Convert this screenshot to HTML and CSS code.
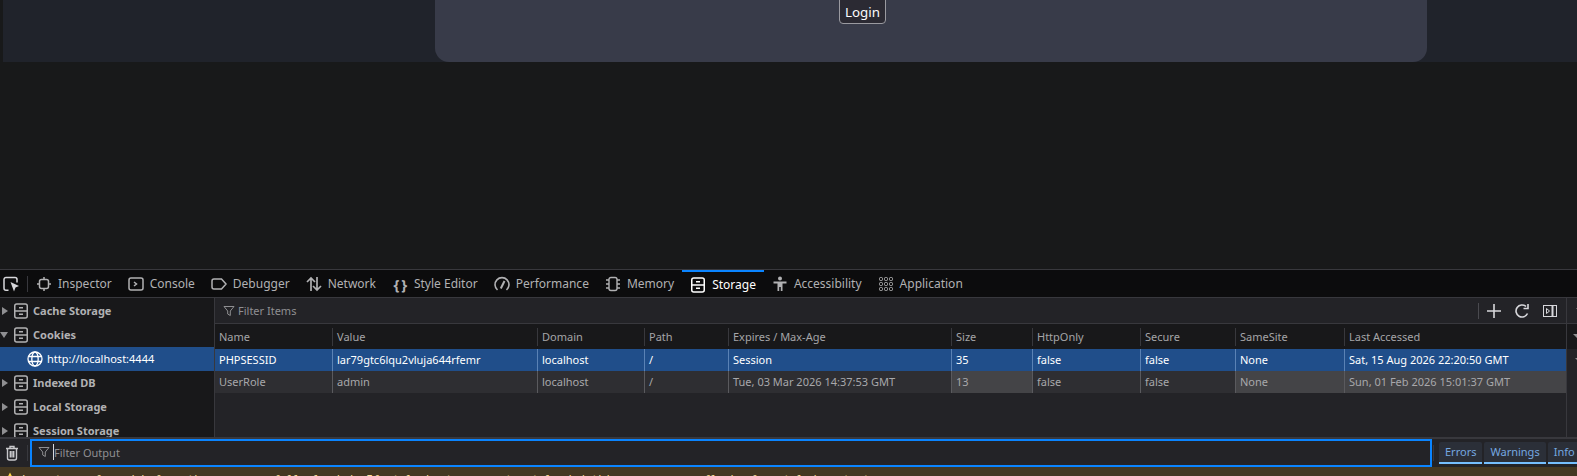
FILE: index.html
```html
<!DOCTYPE html>
<html lang="en">
<head>
  <meta charset="UTF-8">
  <meta name="viewport" content="width=device-width, initial-scale=1.0">
  <title>Storage Inspector</title>
  <link rel="stylesheet" href="styles.css">
</head>
<body>

  <svg class="sprite" width="0" height="0">
    <symbol id="i-storage" viewBox="0 0 16 16">
      <rect x="1.75" y="1" width="12.5" height="14" rx="2" fill="none" stroke="currentColor" stroke-width="1.5"/>
      <path d="M2 8h12M6 4.800h4M6 11.200h4" fill="none" stroke="currentColor" stroke-width="1.400"/>
    </symbol>
    <symbol id="i-filter" viewBox="0 0 12 12">
      <path d="M1 1.500h10L7.300 6v4.500L4.700 9V6z" fill="none" stroke="currentColor" stroke-width="1"/>
    </symbol>
  </svg>

  <!-- the page that is being inspected -->
  <div class="page-frame">
    <div class="page-card">
      <button class="login-btn">Login</button>
    </div>
  </div>
  <div class="page-empty"></div>

  <!-- devtools tabs -->
  <div class="tabs">
    <span class="picker">
      <svg width="16" height="16" viewBox="0 0 16 16" fill="none" stroke="currentColor" stroke-width="1.500">
        <path d="M5.500 14.200H3a2 2 0 0 1-2-2V3.500a2 2 0 0 1 2-2h9a2 2 0 0 1 2 2v3"/>
        <path d="M7.500 6l8.500 4-3.500 1.500-1.500 4z" fill="currentColor" stroke="none"/>
      </svg>
    </span>
    <span class="tab-sep"></span>
    <div class="tab">
      <svg width="16" height="16" viewBox="0 0 16 16" fill="none" stroke="currentColor" stroke-width="1.500">
        <rect x="3.500" y="3.500" width="9" height="9" rx="2"/>
        <path d="M8 1v2.500M8 12.500V15M1 8h2.500M12.500 8H15"/>
      </svg>
      Inspector
    </div>
    <div class="tab">
      <svg width="16" height="16" viewBox="0 0 16 16" fill="none" stroke="currentColor" stroke-width="1.500">
        <rect x="1" y="2" width="14" height="12" rx="2"/>
        <path d="M6 6l2.500 2L6 10"/>
      </svg>
      Console
    </div>
    <div class="tab">
      <svg width="16" height="16" viewBox="0 0 16 16" fill="none" stroke="currentColor" stroke-width="1.500">
        <path d="M3 3h7.500L15 8l-4.500 5H3a2 2 0 0 1-2-2V5a2 2 0 0 1 2-2z"/>
      </svg>
      Debugger
    </div>
    <div class="tab">
      <svg width="16" height="16" viewBox="0 0 16 16" fill="none" stroke="currentColor" stroke-width="1.700">
        <path d="M5 15V2M1 6l4-4 4 4M11 1v13M7 10l4 4 4-4"/>
      </svg>
      Network
    </div>
    <div class="tab">
      <span class="braces">{ }</span>
      Style Editor
    </div>
    <div class="tab">
      <svg width="16" height="16" viewBox="0 0 16 16" fill="none" stroke="currentColor" stroke-width="1.600">
        <path d="M3.500 14A7 7 0 1 1 12.500 14"/>
        <path d="M6.800 12.500L10.500 5" stroke-width="2"/>
      </svg>
      Performance
    </div>
    <div class="tab">
      <svg width="16" height="16" viewBox="0 0 16 16" fill="none" stroke="currentColor" stroke-width="1.400">
        <rect x="4" y="1.500" width="8" height="13" rx="2"/>
        <path d="M1 4h3M1 8h3M1 12h3M12 4h3M12 8h3M12 12h3"/>
      </svg>
      Memory
    </div>
    <div class="tab tab-active">
      <svg width="16" height="16"><use href="#i-storage"/></svg>
      Storage
    </div>
    <div class="tab">
      <svg width="16" height="16" viewBox="0 0 16 16" fill="currentColor">
        <circle cx="8" cy="2.500" r="2"/>
        <path d="M1.500 5.500h13v2H10.500V15H8.800v-4H7.200v4H5.500V7.500H1.500z"/>
      </svg>
      Accessibility
    </div>
    <div class="tab">
      <svg width="16" height="16" viewBox="0 0 16 16" fill="none" stroke="currentColor" stroke-width="1">
        <rect x="1.500" y="1.500" width="3" height="3" rx="1"/><rect x="6.500" y="1.500" width="3" height="3" rx="1"/><rect x="11.500" y="1.500" width="3" height="3" rx="1"/>
        <rect x="1.500" y="6.500" width="3" height="3" rx="1"/><rect x="6.500" y="6.500" width="3" height="3" rx="1"/><rect x="11.500" y="6.500" width="3" height="3" rx="1"/>
        <rect x="1.500" y="11.500" width="3" height="3" rx="1"/><rect x="6.500" y="11.500" width="3" height="3" rx="1"/><rect x="11.500" y="11.500" width="3" height="3" rx="1"/>
      </svg>
      Application
    </div>
  </div>

  <!-- storage panel -->
  <div class="panel">
    <div class="tree">
      <div class="tree-row"><span class="arrow"></span><svg width="16" height="16"><use href="#i-storage"/></svg>Cache Storage</div>
      <div class="tree-row"><span class="arrow arrow-open"></span><svg width="16" height="16"><use href="#i-storage"/></svg>Cookies</div>
      <div class="tree-row tree-selected">
        <svg width="16" height="16" viewBox="0 0 16 16" fill="none" stroke="currentColor" stroke-width="1.300">
          <circle cx="8" cy="8" r="7"/>
          <ellipse cx="8" cy="8" rx="3.200" ry="7"/>
          <path d="M1.500 5.500h13M1.500 10.500h13"/>
        </svg>
        http://localhost:4444
      </div>
      <div class="tree-row"><span class="arrow"></span><svg width="16" height="16"><use href="#i-storage"/></svg>Indexed DB</div>
      <div class="tree-row"><span class="arrow"></span><svg width="16" height="16"><use href="#i-storage"/></svg>Local Storage</div>
      <div class="tree-row"><span class="arrow"></span><svg width="16" height="16"><use href="#i-storage"/></svg>Session Storage</div>
    </div>

    <div class="main">
      <div class="filter-bar">
        <svg class="filter-icon" width="12" height="12"><use href="#i-filter"/></svg>
        <span class="filter-text">Filter Items</span>
        <span class="bar-sep"></span>
        <svg class="bar-icon" width="16" height="16" viewBox="0 0 16 16" fill="none" stroke="currentColor" stroke-width="1.600">
          <path d="M8 1v14M1 8h14"/>
        </svg>
        <svg class="bar-icon" width="16" height="16" viewBox="0 0 16 16" fill="none" stroke="currentColor" stroke-width="1.600">
          <path d="M13.500 10.500A6 6 0 1 1 12 3.500"/>
          <path d="M14 1v4.500H9.500"/>
        </svg>
        <svg class="bar-icon" width="16" height="16" viewBox="0 0 16 16" fill="none" stroke="currentColor" stroke-width="1">
          <rect x="1.500" y="2.500" width="13" height="11"/>
          <path d="M10.500 2.500v11" stroke-width="2"/>
          <path d="M4.500 5.500l3 2.500-3 2.500z"/>
        </svg>
      </div>

      <div class="grid grid-head">
        <div class="th">Name</div>
        <div class="th">Value</div>
        <div class="th">Domain</div>
        <div class="th">Path</div>
        <div class="th">Expires / Max-Age</div>
        <div class="th">Size</div>
        <div class="th">HttpOnly</div>
        <div class="th">Secure</div>
        <div class="th">SameSite</div>
        <div class="th">Last Accessed</div>
      </div>
      <div class="grid row row-selected">
        <div class="td">PHPSESSID</div>
        <div class="td">lar79gtc6lqu2vluja644rfemr</div>
        <div class="td">localhost</div>
        <div class="td">/</div>
        <div class="td">Session</div>
        <div class="td">35</div>
        <div class="td">false</div>
        <div class="td">false</div>
        <div class="td">None</div>
        <div class="td">Sat, 15 Aug 2026 22:20:50 GMT</div>
      </div>
      <div class="grid row">
        <div class="td">UserRole</div>
        <div class="td">admin</div>
        <div class="td">localhost</div>
        <div class="td">/</div>
        <div class="td">Tue, 03 Mar 2026 14:37:53 GMT</div>
        <div class="td td-light">13</div>
        <div class="td">false</div>
        <div class="td">false</div>
        <div class="td td-light">None</div>
        <div class="td td-light">Sun, 01 Feb 2026 15:01:37 GMT</div>
      </div>
    </div>

    <div class="side-strip">
      <div class="strip-top"><span class="strip-arrow"></span></div>
      <div class="strip-head"><span class="strip-arrow"></span></div>
      <div class="strip-row"><span class="strip-arrow"></span></div>
    </div>
  </div>

  <!-- split console -->
  <div class="console-bar">
    <span class="trash">
      <svg width="14" height="16" viewBox="0 0 14 16" fill="none" stroke="currentColor" stroke-width="1.400">
        <path d="M1 3.500h12M5 3.500V1.500h4v2M2.500 3.500V13a2 2 0 0 0 2 2h5a2 2 0 0 0 2-2V3.500M5.300 6v6.500M7 6v6.500M8.700 6v6.500"/>
      </svg>
    </span>
    <span class="tab-sep console-sep"></span>
    <div class="console-input">
      <svg class="filter-icon" width="12" height="12"><use href="#i-filter"/></svg>
      <span class="caret"></span>
      <span class="filter-text">Filter Output</span>
    </div>
    <span class="tab-sep level-sep"></span>
    <button class="level">Errors</button>
    <button class="level">Warnings</button>
    <button class="level">Info</button>
  </div>

  <div class="warn-row">
    <svg class="warn-icon" width="12" height="12" viewBox="0 0 12 12"><path d="M6 0.500L11.500 11H0.500z" fill="#ffd54a"/></svg>
    <span class="warn-text">Layout was forced before the page was fully loaded. If stylesheets are not yet loaded this may cause a flash of unstyled content.</span>
  </div>

</body>
</html>
```

FILE: styles.css
```css
body {
  margin: 0;
  height: 476px;
  overflow: hidden;
  display: flex;
  flex-direction: column;
  background-color: #18191a;
  color: #b1b1b3;
  font-family: "Noto Sans", Arial, sans-serif;
  font-size: 11px;
}

.sprite {
  position: absolute;
}

svg {
  flex: none;
  display: block;
}

/* inspected page */
.page-frame {
  height: 62px;
  flex: none;
  margin-left: 3px;
  padding-left: 432px;
  box-sizing: border-box;
  background-color: #20232b;
  overflow: hidden;
}

.page-card {
  width: 992px;
  height: 62px;
  box-sizing: border-box;
  padding: 0 0 38px 404px;
  display: flex;
  align-items: flex-end;
  background-color: #383b49;
  border-radius: 0 0 14px 14px;
}

.login-btn {
  flex: none;
  width: 47px;
  height: 34px;
  padding: 10px 0 0;
  box-sizing: border-box;
  border: 1px solid #9a9aa0;
  border-radius: 4px;
  background-color: #2b2a33;
  color: #fbfbfe;
  font-family: "Noto Sans", Arial, sans-serif;
  font-size: 13.33px;
}

.page-empty {
  height: 207px;
  flex: none;
}

/* tabs */
.tabs {
  height: 27px;
  flex: none;
  display: flex;
  align-items: center;
  border-top: 1px solid #38383d;
  border-bottom: 1px solid #38383d;
  background-color: #0c0c0d;
  font-size: 12px;
  color: #b1b1b3;
}

.picker {
  width: 27px;
  flex: none;
  padding-left: 3px;
  box-sizing: border-box;
  color: #d7d7db;
}

.tab-sep {
  width: 1px;
  height: 16px;
  flex: none;
  background-color: #38383d;
}

.tab {
  height: 27px;
  flex: none;
  box-sizing: border-box;
  padding: 0 8px;
  display: flex;
  align-items: center;
  gap: 6px;
  white-space: nowrap;
}

.tab-active {
  color: #fff;
  border-top: 2px solid #0a84ff;
}

.braces {
  width: 16px;
  font-weight: bold;
  font-size: 15px;
  line-height: 16px;
  letter-spacing: -1px;
  text-align: center;
  white-space: nowrap;
}

/* panel */
.panel {
  height: 139px;
  flex: none;
  display: flex;
  overflow: hidden;
  border-bottom: 2px solid #38383d;
}

.tree {
  width: 214px;
  flex: none;
  padding-top: 1px;
  border-right: 1px solid #38383d;
  background-color: #18181a;
}

.tree-row {
  height: 24px;
  box-sizing: border-box;
  display: flex;
  align-items: center;
  gap: 4px;
  padding: 0 0 1px 13px;
  font-weight: bold;
  white-space: nowrap;
}

.arrow {
  width: 0;
  height: 0;
  margin-left: -11px;
  margin-right: 1px;
  border-top: 4px solid transparent;
  border-bottom: 4px solid transparent;
  border-left: 6px solid #8f8f92;
}

.arrow-open {
  margin-left: -13px;
  margin-right: 1px;
  border-left: 4px solid transparent;
  border-right: 4px solid transparent;
  border-top: 6px solid #8f8f92;
  border-bottom: 0;
}

.tree-selected {
  padding-left: 27px;
  background-color: #204e8a;
  color: #fff;
  font-weight: normal;
}

.main {
  width: 1351px;
  flex: none;
  background-color: #232327;
  border-right: 1px solid #38383d;
}

.filter-bar {
  height: 25px;
  display: flex;
  align-items: center;
  padding: 0 8px;
  background-color: #232327;
  border-bottom: 1px solid #38383d;
}

.filter-icon {
  color: #8f8f92;
}

.filter-text {
  margin-left: 3px;
  flex: 1;
  color: #8f8f92;
  white-space: nowrap;
}

.bar-sep {
  width: 1px;
  height: 16px;
  flex: none;
  margin-right: 7px;
  background-color: #4a4a4f;
}

.bar-icon {
  color: #d7d7db;
  margin-left: 12px;
}

.bar-sep + .bar-icon {
  margin-left: 0;
}

/* cookie table */
.grid {
  display: grid;
  grid-template-columns: 117px 205px 107px 84px 223px 81px 108px 95px 109px 222px;
  white-space: nowrap;
}

.grid-head {
  height: 25px;
  align-items: center;
  background-color: #18181a;
}

.th {
  height: 18px;
  line-height: 17px;
  padding-left: 4px;
  border-left: 1px solid #38383d;
  color: #a5a5a8;
  overflow: hidden;
}

.th:first-child {
  border-left: 0;
}

.row {
  height: 22px;
  line-height: 21px;
  background-color: #2e2e32;
  color: #a8a8ab;
}

.td {
  padding-left: 4px;
  border-left: 1px solid #5a5a5e;
  overflow: hidden;
}

.td:first-child {
  border-left: 0;
}

.td-light {
  background-color: #444447;
}

.row-selected {
  background-color: #204e8a;
  color: #fff;
}

.row-selected .td {
  border-left-color: #5a82b5;
}

.side-strip {
  flex: 1;
  overflow: hidden;
  background-color: #232327;
}

.strip-top, .strip-head, .strip-row {
  display: flex;
  align-items: center;
}

.strip-top {
  height: 25px;
  padding-left: 9px;
  border-bottom: 1px solid #38383d;
}

.strip-head {
  height: 25px;
  padding-left: 6px;
  background-color: #18181a;
}

.strip-row {
  height: 22px;
  padding-left: 8px;
}

.strip-arrow {
  width: 0;
  height: 0;
  flex: none;
  border-left: 5px solid transparent;
  border-right: 5px solid transparent;
  border-top: 5px solid #8f8f92;
}

/* console toolbar */
.console-bar {
  height: 28px;
  flex: none;
  display: flex;
  align-items: center;
  background-color: #232327;
}

.trash {
  width: 27px;
  flex: none;
  padding-left: 5px;
  box-sizing: border-box;
  color: #c8c8cb;
}

.console-sep {
  margin-right: 2px;
}

.console-input {
  width: 1402px;
  height: 28px;
  flex: none;
  box-sizing: border-box;
  display: flex;
  align-items: center;
  padding: 0 0 2px 6px;
  border: 2px solid #0a84ff;
  background-color: #232327;
}

.caret {
  width: 1px;
  height: 16px;
  flex: none;
  margin-left: 3px;
  background-color: #d7d7db;
}

.console-input .filter-text {
  margin-left: 0;
}

.level-sep {
  margin-left: 1px;
  margin-right: 5px;
}

.level {
  height: 22px;
  flex: none;
  padding: 0 6px 2px;
  margin-right: 2px;
  border: 0;
  border-bottom: 2px solid #75bfff;
  border-radius: 2px 2px 0 0;
  background-color: #2b2f38;
  color: #75a8e0;
  font-family: "Noto Sans", Arial, sans-serif;
  font-size: 11px;
}

/* warning message, cut off by the window */
.warn-row {
  flex: 1;
  min-height: 0;
  display: flex;
  overflow: hidden;
  padding: 6px 0 0 4px;
  background-color: #443822;
  color: #fce2a1;
  font-family: "DejaVu Sans Mono", monospace;
  font-size: 11px;
  line-height: 14px;
  white-space: nowrap;
}

.warn-icon {
  margin-top: -1px;
}

.warn-text {
  margin-left: 6px;
}
```
